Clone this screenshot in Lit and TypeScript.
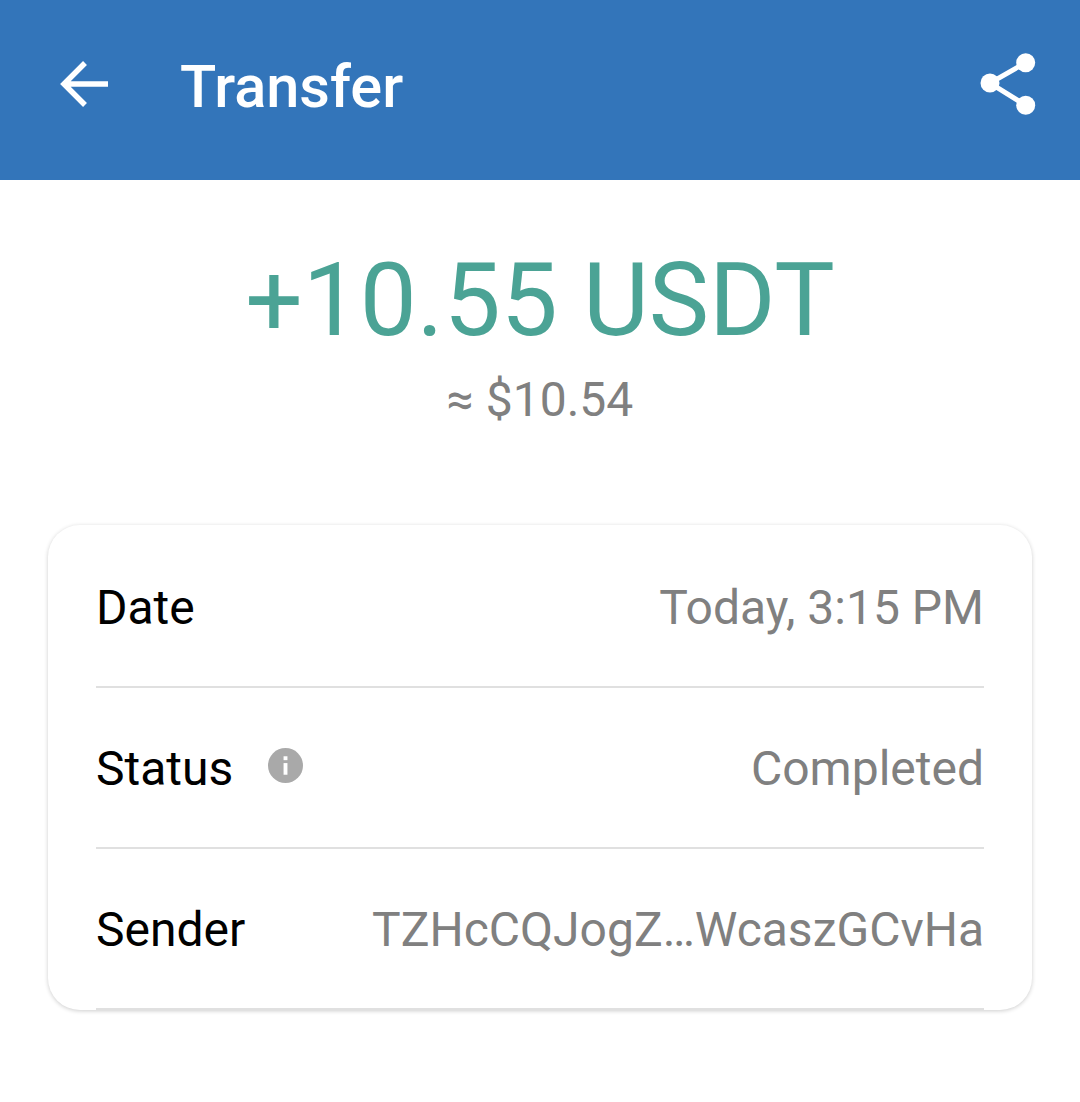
import { LitElement, html, css } from "lit";
import { customElement } from "lit/decorators.js";

@customElement("app-root")
export class AppRoot extends LitElement {
  static styles = css`
    :host { display: block; width: 1080px; height: 1102px; background: #fff; font-family: Roboto, sans-serif; overflow: hidden; }
    .bar { height: 180px; background: #3375ba; display: flex; align-items: center; padding: 0 44px 0 58px; color: #fff; }
    .bar .back { display: block; width: 52px; height: 52px; }
    .title { font-size: 59.5px; font-weight: 500; margin-left: 70px; flex: 1; line-height: 1; margin-top: -4px; }
    .bar .share { width: 56px; height: 62px; overflow: visible; }
    .bar svg { margin-top: -8px; }
    .amount { text-align: center; color: #4ba395; font-size: 101.5px; line-height: 118px; margin-top: 62px; }
    .fiat { text-align: center; color: #808080; font-size: 48px; line-height: 52px; margin-top: 14px; }
    .card { margin: 99px 48px 0; border-radius: 32px; background: #fff; box-shadow: 0 1px 4px rgba(0,0,0,.2); padding: 2px 48px 0; box-sizing: border-box; }
    .row { height: 161px; display: flex; align-items: center; justify-content: space-between; border-bottom: 2px solid #e0e0e0; box-sizing: border-box; font-size: 48px; color: #000; padding-top: 2px; }
    .label { display: flex; align-items: center; gap: 35px; }
    .val { color: #808080; }
    .info { width: 35px; height: 35px; display: block; margin-top: -6px; }
  `;
  render() {
    return html`
      <div class="bar">
        <svg class="back" viewBox="0 0 52 52" fill="none" stroke="#fff" stroke-width="5.5"><path d="M50 24H6M27 3 6 24l21 21"/></svg>
        <div class="title">Transfer</div>
        <svg class="share" viewBox="0 0 56 62" fill="#fff"><circle cx="45.7" cy="7.7" r="9.5"/><circle cx="10" cy="28" r="9.5"/><circle cx="45.7" cy="50.3" r="9.5"/><path d="M45.7 7.7 10 28l35.7 22.3" fill="none" stroke="#fff" stroke-width="5"/></svg>
      </div>
      <div class="amount">+10.55 USDT</div>
      <div class="fiat">≈ $10.54</div>
      <div class="card">
        <div class="row"><div class="label">Date</div><div class="val">Today, 3:15 PM</div></div>
        <div class="row"><div class="label">Status
          <svg class="info" viewBox="0 0 36 36"><circle cx="18" cy="18" r="18" fill="#a9a9a9"/><rect x="16" y="15.5" width="4" height="12" fill="#fff"/><rect x="16" y="8.5" width="4" height="4" fill="#fff"/></svg>
        </div><div class="val">Completed</div></div>
        <div class="row"><div class="label">Sender</div><div class="val">TZHcCQJogZ…WcaszGCvHa</div></div>
      </div>
    `;
  }
}
